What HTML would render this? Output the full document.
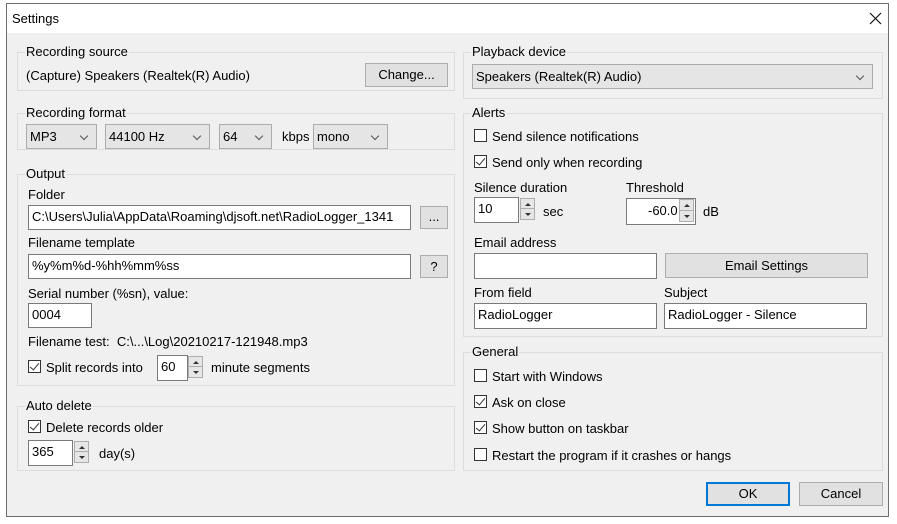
<!DOCTYPE html>
<html><head><meta charset="utf-8"><style>
*{box-sizing:border-box}
body{margin:0;width:897px;height:524px;background:#fff;font-family:"Liberation Sans",sans-serif;font-size:13px;color:#000;position:relative;overflow:hidden}
.a{position:absolute;white-space:nowrap}
#win{position:absolute;left:6px;top:3px;width:883px;height:514px;border:1px solid #6e6e6e;background:#f0f0f0}
#title{position:absolute;left:7px;top:4px;width:881px;height:29px;background:#fff}
.g{position:absolute;border:1px solid #dcdcdc}
.gl{position:absolute;background:#f0f0f0;padding:0 1px;line-height:14px}
.in{position:absolute;background:#fff;border:1px solid #7a7a7a;line-height:22px;padding-left:3px}
.btn{position:absolute;background:#e1e1e1;border:1px solid #adadad;text-align:center}
.cb{position:absolute;width:13px;height:13px;border:1px solid #333;background:#fff}
.cb.c::after{content:"";position:absolute;left:3px;top:0px;width:4px;height:8px;border:solid #333;border-width:0 1.3px 1.3px 0;transform:rotate(40deg)}
.cmb{position:absolute;background:#e5e5e5;border:1px solid #acacac;line-height:23px;padding-left:3px}
.cmb::after{content:"";position:absolute;right:9px;top:8px;width:5px;height:5px;border:solid #555;border-width:0 1px 1px 0;transform:rotate(45deg)}
.sp{position:absolute;width:15px;border:1px solid #adadad;background:#e6e6e6}
.sp div{height:50%;border-bottom:1px solid #adadad;position:relative}
.sp div:last-child{border-bottom:0}
.sp div::after{content:"";position:absolute;left:4px;top:4px;border-left:3px solid transparent;border-right:3px solid transparent}
.sp .u::after{border-bottom:3px solid #333}
.sp .d::after{border-top:3px solid #333}
</style></head><body>
<div id="win"></div><div id="title"></div>
<div class="a" style="left:12px;top:11px">Settings</div>
<svg class="a" style="left:869px;top:12px" width="13" height="13"><path d="M1 1L12 12M12 1L1 12" stroke="#111" stroke-width="1.2"/></svg>

<div class="g" style="left:17px;top:52px;width:438px;height:39px"></div>
<div class="gl a" style="left:25px;top:45px">Recording source</div>
<div class="a" style="left:26px;top:68px">(Capture) Speakers (Realtek(R) Audio)</div>
<div class="btn" style="left:365px;top:63px;width:83px;height:24px;line-height:22px">Change...</div>

<div class="g" style="left:17px;top:113px;width:438px;height:37px"></div>
<div class="gl a" style="left:25px;top:106px">Recording format</div>
<div class="cmb" style="left:26px;top:124px;width:71px;height:25px">MP3</div>
<div class="cmb" style="left:105px;top:124px;width:105px;height:25px">44100 Hz</div>
<div class="cmb" style="left:219px;top:124px;width:53px;height:25px">64</div>
<div class="a" style="left:282px;top:129px">kbps</div>
<div class="cmb" style="left:313px;top:124px;width:75px;height:25px">mono</div>

<div class="g" style="left:17px;top:174px;width:438px;height:212px"></div>
<div class="gl a" style="left:25px;top:167px">Output</div>
<div class="a" style="left:28px;top:187px">Folder</div>
<div class="in" style="left:28px;top:205px;width:383px;height:25px;overflow:hidden">C:\Users\Julia\AppData\Roaming\djsoft.net\RadioLogger_1341</div>
<div class="btn" style="left:420px;top:206px;width:28px;height:23px;line-height:20px">...</div>
<div class="a" style="left:28px;top:235px">Filename template</div>
<div class="in" style="left:28px;top:254px;width:383px;height:25px">%y%m%d-%hh%mm%ss</div>
<div class="btn" style="left:420px;top:255px;width:28px;height:23px;line-height:21px">?</div>
<div class="a" style="left:28px;top:286px">Serial number (%sn), value:</div>
<div class="in" style="left:28px;top:303px;width:64px;height:25px">0004</div>
<div class="a" style="left:28px;top:334px">Filename test:&nbsp; C:\...\Log\20210217-121948.mp3</div>
<div class="cb c" style="left:28px;top:360px"></div>
<div class="a" style="left:46px;top:360px">Split records into</div>
<div class="in" style="left:157px;top:355px;width:31px;height:26px">60</div>
<div class="sp" style="left:188px;top:356px;height:22px"><div class="u"></div><div class="d"></div></div>
<div class="a" style="left:211px;top:360px">minute segments</div>

<div class="g" style="left:17px;top:406px;width:438px;height:65px"></div>
<div class="gl a" style="left:25px;top:399px">Auto delete</div>
<div class="cb c" style="left:28px;top:420px"></div>
<div class="a" style="left:46px;top:420px">Delete records older</div>
<div class="in" style="left:28px;top:440px;width:45px;height:26px">365</div>
<div class="sp" style="left:74px;top:441px;height:22px"><div class="u"></div><div class="d"></div></div>
<div class="a" style="left:99px;top:446px">day(s)</div>

<div class="g" style="left:463px;top:52px;width:420px;height:47px"></div>
<div class="gl a" style="left:471px;top:45px">Playback device</div>
<div class="cmb" style="left:472px;top:64px;width:401px;height:25px">Speakers (Realtek(R) Audio)</div>

<div class="g" style="left:463px;top:113px;width:420px;height:224px"></div>
<div class="gl a" style="left:471px;top:106px">Alerts</div>
<div class="cb" style="left:474px;top:129px"></div>
<div class="a" style="left:492px;top:129px">Send silence notifications</div>
<div class="cb c" style="left:474px;top:155px"></div>
<div class="a" style="left:492px;top:155px">Send only when recording</div>
<div class="a" style="left:474px;top:180px">Silence duration</div>
<div class="a" style="left:626px;top:180px">Threshold</div>
<div class="in" style="left:474px;top:197px;width:45px;height:26px">10</div>
<div class="sp" style="left:520px;top:198px;height:22px"><div class="u"></div><div class="d"></div></div>
<div class="a" style="left:543px;top:204px">sec</div>
<div class="in" style="left:626px;top:198px;width:70px;height:27px;padding-left:0"><span class="a" style="left:21px;top:2px;line-height:20px">-60.0</span></div>
<div class="sp" style="left:679px;top:199px;height:23px"><div class="u"></div><div class="d"></div></div>
<div class="a" style="left:703px;top:204px">dB</div>
<div class="a" style="left:474px;top:235px">Email address</div>
<div class="in" style="left:474px;top:253px;width:183px;height:26px"></div>
<div class="btn" style="left:665px;top:253px;width:203px;height:25px;line-height:23px">Email Settings</div>
<div class="a" style="left:474px;top:285px">From field</div>
<div class="a" style="left:664px;top:285px">Subject</div>
<div class="in" style="left:474px;top:303px;width:183px;height:26px">RadioLogger</div>
<div class="in" style="left:664px;top:303px;width:203px;height:26px">RadioLogger - Silence</div>

<div class="g" style="left:463px;top:352px;width:420px;height:119px"></div>
<div class="gl a" style="left:471px;top:345px">General</div>
<div class="cb" style="left:474px;top:369px"></div>
<div class="a" style="left:492px;top:369px">Start with Windows</div>
<div class="cb c" style="left:474px;top:395px"></div>
<div class="a" style="left:492px;top:395px">Ask on close</div>
<div class="cb c" style="left:474px;top:421px"></div>
<div class="a" style="left:492px;top:421px">Show button on taskbar</div>
<div class="cb" style="left:474px;top:448px"></div>
<div class="a" style="left:492px;top:448px">Restart the program if it crashes or hangs</div>

<div class="btn" style="left:706px;top:482px;width:84px;height:24px;line-height:20px;border:2px solid #0078d7">OK</div>
<div class="btn" style="left:799px;top:482px;width:84px;height:24px;line-height:22px">Cancel</div>
</body></html>
